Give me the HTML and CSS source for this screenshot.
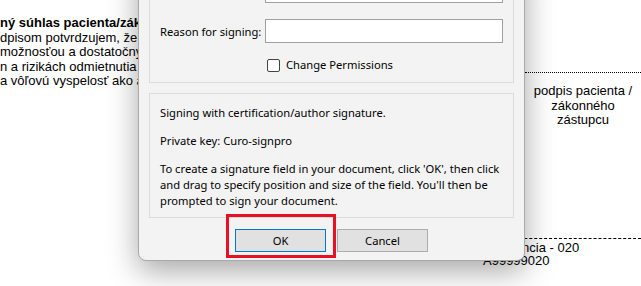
FILE: index.html
```html
<!DOCTYPE html>
<html lang="sk">
<head>
<meta charset="UTF-8">
<meta name="viewport" content="width=device-width, initial-scale=1.0">
<title>Sign Document</title>
<link rel="stylesheet" href="styles.css">
</head>
<body>
<div class="page">
    <!-- the document behind the dialog -->
    <div class="doc">
        <div class="consent">
            <p class="consent-title">ný súhlas pacienta/zákonného zástupcu</p>
            <p>dpisom potvrdzujem, že som bol(a) poučený(á) lekárom</p>
            <p>možnosťou a dostatočným časom na rozhodnutie</p>
            <p>n a rizikách odmietnutia poskytnutia zdravotnej starostlivosti</p>
            <p>a vôľovú vyspelosť ako aj schopnosť rozhodnúť sa</p>
        </div>
        <div class="signs">
            <div class="sign-patient">podpis pacienta /<br>zákonného<br>zástupcu</div>
            <div class="sign-doctor">Referencia - 020<br>A99999020</div>
        </div>
    </div>

    <!-- sign dialog -->
    <div class="dialog">
        <div class="group">
            <div class="field-row">
                <label class="field-label">Location:</label>
                <input type="text" class="field-input">
            </div>
            <div class="field-row">
                <label class="field-label">Reason for signing:</label>
                <input type="text" class="field-input">
            </div>
            <div class="check-row">
                <span class="checkbox"></span>
                <span>Change Permissions</span>
            </div>
        </div>
        <div class="group info">
            <p>Signing with certification/author signature.</p>
            <p>Private key: Curo-signpro</p>
            <p>To create a signature field in your document, click 'OK', then click and drag to specify position and size of the field. You'll then be prompted to sign your document.</p>
        </div>
        <div class="buttons">
            <span class="ok-wrap"><button class="btn btn-default">OK</button></span>
            <button class="btn">Cancel</button>
        </div>
    </div>
</div>
</body>
</html>
```

FILE: styles.css
```css
body {
    margin: 0;
    padding: 0;
    background: #fff;
}
.page {
    position: relative;
    height: 286px;
    overflow: hidden;
}

/* document */
.doc {
    display: flex;
    font-family: "Liberation Sans", Arial, sans-serif;
    font-size: 13px;
    color: #000;
}
.consent {
    width: 470px;
    overflow: hidden;
    white-space: nowrap;
    padding-top: 16px;
    line-height: 14.5px;
}
.consent p {
    margin: 0;
}
.consent-title {
    font-weight: bold;
}
.signs {
    flex: 1;
    padding-top: 72px;
}
.sign-patient {
    margin-left: 55px;
    border-top: 1px dotted #000;
    padding-top: 11px;
    text-align: center;
    line-height: 14.5px;
}
.sign-doctor {
    margin-top: 110px;
    border-top: 1px dashed #000;
    padding: 2px 0 0 13px;
    line-height: 13px;
}

/* dialog */
.dialog {
    position: absolute;
    left: 138px;
    bottom: 25px;
    width: 387px;
    box-sizing: border-box;
    padding: 0 10px 8px;
    background: #f3f3f3;
    border: 1px solid #a9a9a9;
    border-radius: 0 0 8px 8px;
    box-shadow: 0 10px 30px rgba(0, 0, 0, 0.35);
    font-family: "Noto Sans", sans-serif;
    font-size: 11.2px;
    color: #000;
}
.group {
    border: 1px solid #dcdcdc;
    padding: 0 10px 10px;
}
.field-row {
    display: flex;
    align-items: center;
    justify-content: space-between;
    margin-top: 16px;
}
.field-label {
    white-space: nowrap;
}
.field-input {
    width: 238px;
    height: 24px;
    box-sizing: border-box;
    border: 1px solid #a0a0a0;
    background: #fff;
    margin: 0;
}
.check-row {
    display: flex;
    align-items: center;
    gap: 6px;
    margin: 15px 0 0 107px;
    line-height: 14px;
}
.checkbox {
    width: 13px;
    height: 13px;
    box-sizing: border-box;
    border: 1px solid #444;
    border-radius: 2px;
    background: #fff;
}
.info {
    margin-top: 10px;
    padding: 11px 10px 8px;
    line-height: 16px;
}
.info p {
    margin: 0 0 12px;
}
.info p:last-child {
    margin-bottom: 0;
}
.buttons {
    display: flex;
    justify-content: center;
    gap: 11px;
    margin-top: 11px;
}
.ok-wrap {
    position: relative;
    display: flex;
}
.ok-wrap::after {
    content: "";
    position: absolute;
    top: -15px;
    left: -9px;
    right: -10px;
    bottom: -6px;
    border: 3px solid #e81123;
}
.btn {
    width: 91px;
    height: 23px;
    box-sizing: border-box;
    border: 1px solid #adadad;
    background: #e1e1e1;
    font-family: "Noto Sans", sans-serif;
    font-size: 11.2px;
    color: #000;
    padding: 0;
}
.btn-default {
    border-color: #0078d7;
}
```
